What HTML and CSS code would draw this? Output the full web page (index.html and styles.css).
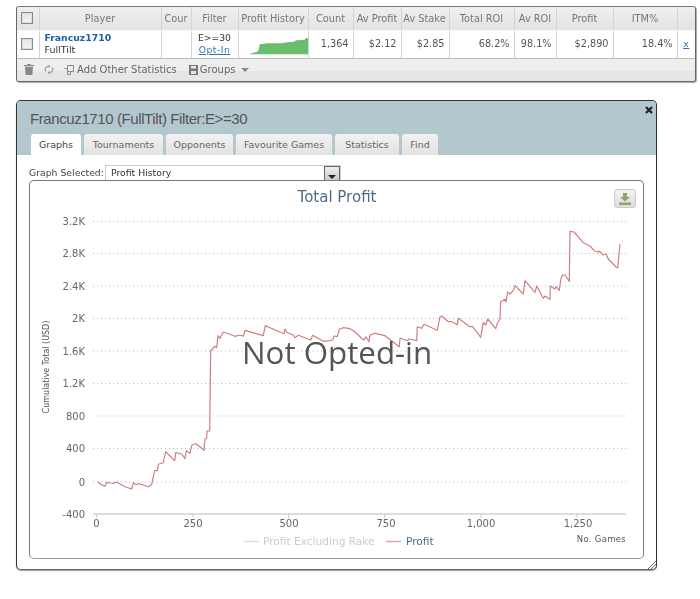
FILE: index.html
```html
<!DOCTYPE html>
<html lang="en">
<head>
<meta charset="utf-8">
<title>Francuz1710 stats</title>
<link rel="stylesheet" href="styles.css">
</head>
<body>
<div class="grid-panel">
  <table class="stats">
    <colgroup>
      <col class="c-check"><col class="c-player"><col class="c-cour"><col class="c-filter"><col class="c-hist"><col class="c-count"><col class="c-avp"><col class="c-avs"><col class="c-troi"><col class="c-aroi"><col class="c-profit"><col class="c-itm"><col class="c-x">
    </colgroup>
    <thead>
      <tr>
        <th><span class="check"></span></th>
        <th>Player</th><th>Cour</th><th>Filter</th><th>Profit History</th><th>Count</th><th>Av Profit</th><th><span class="clip">Av Stake</span></th><th>Total ROI</th><th>Av ROI</th><th>Profit</th><th>ITM%</th><th></th>
      </tr>
    </thead>
    <tbody>
      <tr>
        <td class="center"><span class="check"></span></td>
        <td class="player"><a class="name">Francuz1710</a><br>FullTilt</td>
        <td></td>
        <td class="center filter">E&gt;=30<br><a class="link">Opt-In</a></td>
        <td class="spark"><svg width="70" height="26" viewBox="0 0 70 26"><polygon fill="#6abd6c" points="11,21.700 15.300,20.700 19.300,19 20.700,12.300 28.700,11.300 42,11.300 48.700,10.300 55.300,9.700 57,8.300 65.300,8 67.300,5.700 70,6.700 70,22.300 11,22.300"/></svg></td>
        <td class="num">1,364</td>
        <td class="num">$2.12</td>
        <td class="num">$2.85</td>
        <td class="num">68.2%</td>
        <td class="num">98.1%</td>
        <td class="num">$2,890</td>
        <td class="num">18.4%</td>
        <td class="center"><a class="link">x</a></td>
      </tr>
    </tbody>
  </table>
  <div class="toolbar">
    <svg class="ico" width="10" height="11" viewBox="0 0 10 11"><path fill="#888" d="M3.500 0h3l.5 1h3v1.200H0V1h3zM1 3h8l-.7 8H1.700z"/></svg>
    <svg class="ico ico-sync" width="10" height="11" viewBox="0 0 11 11"><path fill="none" stroke="#999" stroke-width="1.300" d="M2 7.500A3.500 3.500 0 0 1 5 2M9 3.500A3.500 3.500 0 0 1 6 9"/><path fill="#999" d="M5 0l2 2-2 2zM6 7l-2 2 2 2z"/></svg>
    <span class="tool-add"><svg width="10" height="10" viewBox="0 0 10 10"><path fill="none" stroke="#888" d="M3.500.5h6v6h-6zM.5 3.500h3v6h3v-3"/></svg>Add Other Statistics</span>
    <span class="tool-groups"><svg width="9" height="10" viewBox="0 0 9 10"><path fill="#777" d="M0 0h9v10H0zM2 1v2.500h5V1zM2 6v3h5V6z"/></svg>Groups<i class="caret"></i></span>
  </div>
</div>

<section class="modal">
  <header class="modal-head">
    <h1>Francuz1710 (FullTilt) Filter:E&gt;=30</h1>
    <svg class="close" width="8" height="8" viewBox="0 0 8 8"><path stroke="#222" stroke-width="2.200" d="M1 1l6 6M7 1L1 7"/></svg>
    <nav class="tabs">
      <a class="tab active t1">Graphs</a>
      <a class="tab t2">Tournaments</a>
      <a class="tab t3">Opponents</a>
      <a class="tab t4">Favourite Games</a>
      <a class="tab t5">Statistics</a>
      <a class="tab t6">Find</a>
    </nav>
  </header>
  <div class="modal-body">
    <div class="select-row">
      <label>Graph Selected:</label>
      <div class="select"><span>Profit History</span><i class="select-btn"></i></div>
    </div>
    <div class="chart">
      <svg class="plot" width="612" height="376" viewBox="30 181 612 376">
        <text class="title" x="337" y="202" text-anchor="middle">Total Profit</text>
        <g class="grid">
          <path d="M93 221.500H626M93 253.500H626M93 286H626M93 318.500H626M93 351H626M93 383.500H626M93 416H626M93 448.500H626M93 482H626"/>
        </g>
        <g class="ylab" text-anchor="end">
          <text x="85" y="225">3.2K</text>
          <text x="85" y="257">2.8K</text>
          <text x="85" y="290">2.4K</text>
          <text x="85" y="322">2K</text>
          <text x="85" y="355">1.6K</text>
          <text x="85" y="387">1.2K</text>
          <text x="85" y="420">800</text>
          <text x="85" y="452">400</text>
          <text x="85" y="486">0</text>
          <text x="85" y="518">-400</text>
        </g>
        <text class="ytitle" transform="translate(49 367) rotate(-90)" text-anchor="middle">Cumulative Total (USD)</text>
        <path class="axis" d="M93 514H626"/>
        <path class="tick" d="M96.500 514v4M193 514v4M288.500 514v4M384.500 514v4M481 514v4M577 514v4"/>
        <g class="xlab" text-anchor="middle">
          <text x="96.500" y="527">0</text>
          <text x="193" y="527">250</text>
          <text x="289" y="527">500</text>
          <text x="386" y="527">750</text>
          <text x="481" y="527">1,000</text>
          <text x="578" y="527">1,250</text>
        </g>
        <polyline class="line" points="98,482 100.700,484.300 105,486.300 106.700,482.300 110.700,483 113.300,483.300 116.700,482 120,484 125,486.700 131.700,489 133.300,482.700 136,484.700 138.300,483.700 143.300,485 148.300,486.700 151.700,484.300 152.700,479.300 154.700,470.700 157.300,470.700 158.300,464.300 163.300,462.700 165.700,451.700 170,456 174.700,460.700 175.700,452.700 181.700,454 185,458.700 186.300,450.700 190,453.300 191.700,445.300 196,443.700 204,450.300 205,439 206.700,438.300 207,431 209.700,431 210.700,350.700 213.300,348.300 214.300,346.300 216.700,347.700 218,335.700 220,338.300 223.300,332 228.300,333.700 235,336.300 240,335 243.300,336.300 245,330.300 263.300,335.700 265.300,325.700 284,333.700 285,329 286.700,332.300 293.300,335 295,337.700 298.300,335.300 310.700,340 312.700,335.300 323.300,341.300 330,340.700 332.700,340 334,336 337.300,336.700 339.300,329.300 343.300,327.700 350,328.700 355,332 361.700,338.300 364,340 366,336.700 369,341.700 370,335 375,333.300 385,335.700 399.300,346.700 400,338 407.300,340.700 409.300,339 416.700,340.700 417.300,326.700 421.700,328.300 424,324.300 437.300,330.300 440,316.700 441.700,316 448.300,321.700 451.700,321.700 457.300,324.700 458.300,318.300 470,326.700 472.700,326.700 480.700,337.300 483.300,322.300 485.700,325 487.700,319 495.700,328.700 497.300,323.300 500,318.700 500.700,301.700 505,299.300 506,302 507.700,292 510,294 513.300,290.300 515,285.700 523.300,294 525,280.700 535,292.300 536.700,286 543.300,298.300 545,296 550,299.300 550.300,286 555,289 556,286.700 559.300,290.300 560.700,280 562.300,275 565,275 569.300,281.300 570,231.300 574,232 583.300,242.700 590,246 594.300,250.700 598.300,252.300 599,251 603.300,255 606,254 608.300,259 616.700,267.700 617.700,267.700 620,244"/>
        <g class="legend">
          <path class="lg-off" d="M244 541.500h15"/>
          <text class="lg-off-t" x="263" y="545">Profit Excluding Rake</text>
          <path class="lg-on" d="M386 541.500h15"/>
          <text class="lg-on-t" x="406" y="545">Profit</text>
        </g>
        <text class="games" x="626" y="542" text-anchor="end">No. Games</text>
      </svg>
      <span class="export"><svg width="12" height="12" viewBox="0 0 12 12"><path fill="#8fa56a" d="M4 0h4v4h3L6 8.500 1 4h3zM0 9.500h12V12H0z"/></svg></span>
      <div class="watermark">Not Opted-in</div>
    </div>
  </div>
  <svg class="resize" width="8" height="8" viewBox="0 0 8 8"><path stroke="#666" d="M0 8l8-8M3 8l5-5M6 8l2-2"/></svg>
</section>
</body>
</html>
```
FILE: styles.css
```css
* { box-sizing: border-box; }
html, body { margin: 0; padding: 0; background: #fff; overflow: hidden; }
body { height: 599px; padding: 6px 0 0 16px; font-family: "DejaVu Sans", sans-serif; font-size: 9.5px; color: #333; }

.grid-panel { width: 680px; height: 76px; border: 1px solid #666; border-top-color: #777; border-radius: 3px; background: #eee; overflow: hidden; box-shadow: 1px 1px 1px #aaa; filter: blur(.3px); }
.stats { width: 678px; height: 50px; border-collapse: collapse; table-layout: fixed; }
.c-check { width: 22px; } .c-player { width: 122px; } .c-cour { width: 30px; } .c-filter { width: 47px; } .c-hist { width: 70px; } .c-count { width: 45px; }
.c-avp { width: 48px; } .c-avs { width: 48px; } .c-troi { width: 65px; } .c-aroi { width: 42px; } .c-profit { width: 57px; } .c-itm { width: 64px; } .c-x { width: 18px; }
.stats thead tr { height: 23px; background: linear-gradient(#efefef, #e3e3e3); }
.stats th { font-weight: normal; font-size: 9.800px; color: #777; padding: 0 1px; border-right: 1px solid #d4d4d4; border-bottom: 1px solid #f8f8f8; white-space: nowrap; overflow: hidden; text-align: center; }
.stats th:last-child { border-right: 0; }
.clip { display: block; width: 44px; overflow: hidden; }
.stats tbody tr { height: 27px; background: #fff; }
.stats td { padding: 0 3px; border-right: 1px solid #d4d4d4; border-bottom: 1px solid #bbb; line-height: 12px; vertical-align: middle; color: #333; white-space: nowrap; overflow: hidden; }
.stats td:last-child { border-right: 0; }
.center { text-align: center; }
.num { text-align: right; font-size: 9.700px; }
.stats td.num { padding-right: 4px; color: #555; }
.stats td.player { padding-left: 5px; color: #333; }
.name { font-weight: bold; font-size: 9.300px; color: #1d5fa8; }
.stats td.filter { font-size: 9.200px; }
.link { color: #2a74b8; text-decoration: underline; letter-spacing: .5px; }
.stats td.spark { padding: 0; vertical-align: top; }
.spark svg { display: block; margin-top: 1px; }
.check { display: inline-block; width: 12px; height: 12px; margin-right: 2px; border: 1px solid #8a8a8a; background: linear-gradient(#e4e4e4, #f4f4f4); vertical-align: middle; box-shadow: inset 0 0 0 1px #ddd; }

.toolbar { display: flex; align-items: center; height: 24px; padding: 0 0 2px 7px; font-size: 10px; background: linear-gradient(#eeeeee 0, #eeeeee 50%, #e6e6e6 50%, #e6e6e6 100%); color: #666; }
.ico { flex: none; }
.ico-sync { margin-left: 10px; }
.tool-add { display: flex; align-items: center; gap: 3px; margin-left: 10px; }
.tool-groups { display: flex; align-items: center; gap: 2px; margin-left: 12px; }
.caret { width: 0; height: 0; margin-left: 4px; border: 4px solid transparent; border-top: 4px solid #888; border-bottom: 0; }

.modal { position: relative; width: 641px; height: 470px; margin-top: 18px; border: 1px solid #333; border-bottom-color: #666; border-radius: 5px; background: #fff; overflow: hidden; box-shadow: 0 1px 1px #999; filter: blur(.3px); }
.modal-head { position: relative; height: 54px; background: #b3c7ce; padding: 10px 0 0 13px; }
.modal-head h1 { margin: 0; font: normal 15px/16px "Liberation Sans", Arial, sans-serif; letter-spacing: -.4px; color: #555; }
.close { position: absolute; top: 5px; right: 3px; }
.tabs { position: absolute; left: 14px; bottom: 0; display: flex; gap: 3px; height: 21px; }
.tab { display: flex; align-items: center; justify-content: center; height: 21px; border-radius: 3px 3px 0 0; background: linear-gradient(#f2f2f2, #e2e2e2); color: #666; }
.tab.active { background: #fff; color: #444; }
.t1 { width: 50px; } .t2 { width: 79px; } .t3 { width: 67px; } .t4 { width: 96px; } .t5 { width: 64px; } .t6 { width: 36px; }

.modal-body { padding: 9px 0 0 12px; }
.select-row { display: flex; align-items: center; height: 16px; }
.select-row label { width: 76px; color: #444; font-size: 9.300px; }
.select { position: relative; width: 236px; height: 15px; padding-left: 5px; border: 1px solid #ccc; border-bottom: 0; line-height: 14px; font-size: 9.300px; color: #333; }
.select-btn { position: absolute; right: 0; top: 0; width: 16px; height: 15px; border: 1px solid #666; background: linear-gradient(#eee, #ccc); }
.select-btn::after { content: ""; position: absolute; left: 3px; top: 8px; border: 4px solid transparent; border-top: 4px solid #222; border-bottom: 0; }

.chart { position: relative; width: 615px; height: 379px; border: 1px solid #777; border-bottom-color: #999; border-radius: 5px; background: #fff; }
.plot { display: block; }
.plot text { font-family: "DejaVu Sans", sans-serif; }
.title { font-size: 15px; fill: #4d6b88; }
.grid path { fill: none; stroke: #bbb; stroke-dasharray: 1 3; }
.ylab text, .xlab text { font-size: 10px; fill: #666; }
.ytitle { font-size: 8px; fill: #555; }
.axis { stroke: #ddd; stroke-width: 2; fill: none; }
.tick { stroke: #c0d0e0; fill: none; }
.line { fill: none; stroke: #cf7f7f; stroke-width: 1.200; stroke-linejoin: round; }
.lg-off { stroke: #ddd; stroke-width: 1.500; }
.lg-on { stroke: #dcaaaa; stroke-width: 1.500; }
.legend text { font-size: 10.600px; }
.lg-off-t { fill: #ccc; }
.lg-on-t { fill: #4d6b88; }
.games { font-size: 8.500px; fill: #555; letter-spacing: .3px; }
.export { position: absolute; right: 7px; top: 8px; display: flex; align-items: center; justify-content: center; width: 22px; height: 19px; border: 1px solid #ccc; border-radius: 3px; background: linear-gradient(#f4f4f4, #dcdcdc); }
.watermark { position: absolute; left: 212px; top: 150px; font: 31.300px/42px "Open Sans", sans-serif; color: #555; white-space: nowrap; }
.resize { position: absolute; right: 0; bottom: 0; }
```
